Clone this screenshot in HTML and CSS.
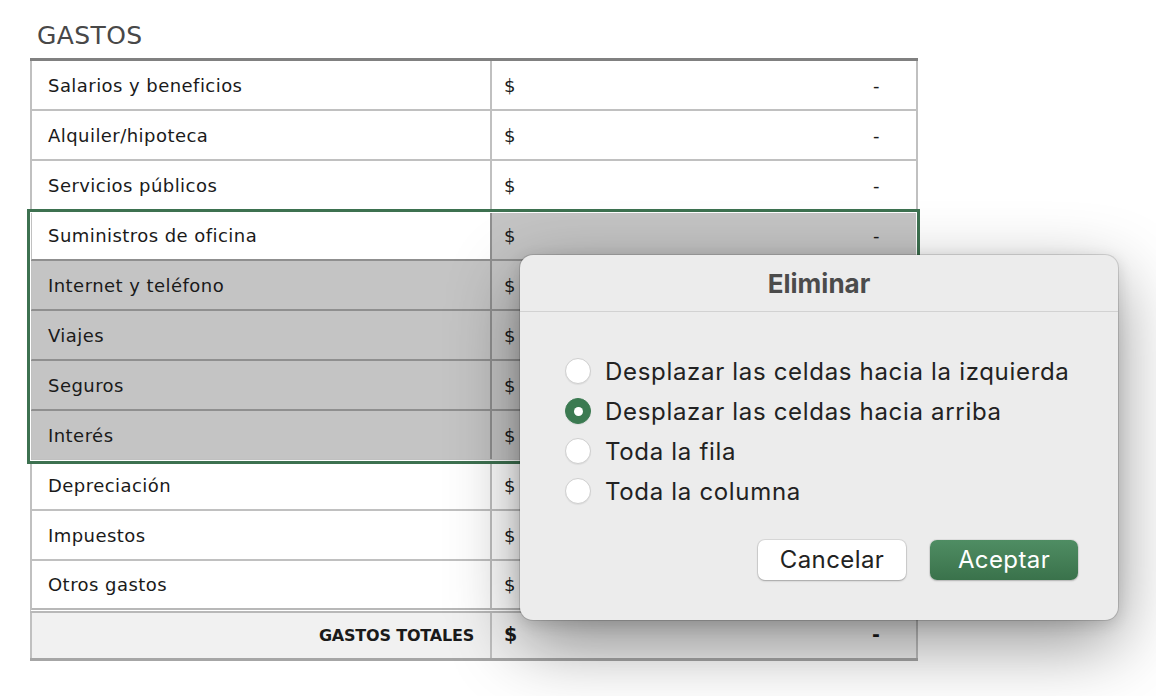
FILE: index.html
```html
<!DOCTYPE html>
<html lang="es">
<head>
<meta charset="utf-8">
<title>Gastos</title>
<link rel="stylesheet" href="styles.css">
</head>
<body>
<div class="page">
  <h1 class="title">GASTOS</h1>
  <div class="sheet">
    <div class="row"><div class="lbl">Salarios y beneficios</div><div class="val"><span>$</span><span>-</span></div></div>
    <div class="row"><div class="lbl">Alquiler/hipoteca</div><div class="val"><span>$</span><span>-</span></div></div>
    <div class="row"><div class="lbl">Servicios públicos</div><div class="val"><span>$</span><span>-</span></div></div>
    <div class="selection">
      <div class="row sel"><div class="lbl active">Suministros de oficina</div><div class="val"><span>$</span><span class="hidden-dash">-</span></div></div>
      <div class="row sel"><div class="lbl">Internet y teléfono</div><div class="val"><span>$</span><span>-</span></div></div>
      <div class="row sel"><div class="lbl">Viajes</div><div class="val"><span>$</span><span>-</span></div></div>
      <div class="row sel"><div class="lbl">Seguros</div><div class="val"><span>$</span><span>-</span></div></div>
      <div class="row sel last"><div class="lbl">Interés</div><div class="val"><span>$</span><span>-</span></div></div>
    </div>
    <div class="row"><div class="lbl">Depreciación</div><div class="val"><span>$</span><span>-</span></div></div>
    <div class="row"><div class="lbl">Impuestos</div><div class="val"><span>$</span><span>-</span></div></div>
    <div class="row pre-total"><div class="lbl">Otros gastos</div><div class="val"><span>$</span><span>-</span></div></div>
    <div class="row total"><div class="lbl">GASTOS TOTALES</div><div class="val"><span>$</span><span>-</span></div></div>
  </div>

  <div class="dialog">
    <div class="dlg-head">Eliminar</div>
    <div class="dlg-body">
      <label class="opt"><span class="radio"></span>Desplazar las celdas hacia la izquierda</label>
      <label class="opt"><span class="radio on"></span>Desplazar las celdas hacia arriba</label>
      <label class="opt"><span class="radio"></span>Toda la fila</label>
      <label class="opt"><span class="radio"></span>Toda la columna</label>
    </div>
    <div class="dlg-foot">
      <button class="btn cancel">Cancelar</button>
      <button class="btn ok">Aceptar</button>
    </div>
  </div>
</div>
</body>
</html>
```
FILE: styles.css
```css
html, body {
  margin: 0;
  padding: 0;
  background: #ffffff;
}
.page {
  position: relative;
  width: 1156px;
  height: 696px;
  overflow: hidden;
  padding: 0 0 0 30px;
  box-sizing: border-box;
  font-family: "DejaVu Sans", "Liberation Sans", sans-serif;
}
.title {
  margin: 0;
  padding: 21px 0 0 7px;
  height: 37px;
  font-size: 25px;
  font-weight: normal;
  color: #484848;
  line-height: 30px;
  letter-spacing: 0.4px;
}
.sheet {
  width: 888px;
  border-top: 3px solid #808080;
  border-bottom: 3px solid #a6a6a6;
  box-sizing: border-box;
}
.row {
  display: flex;
  height: 50px;
  border-left: 2px solid #c0c0c0;
  border-right: 2px solid #c0c0c0;
  border-bottom: 2px solid #c0c0c0;
  box-sizing: border-box;
  font-size: 18px;
  letter-spacing: 0.45px;
  color: #1a1a1a;
}
.lbl {
  width: 460px;
  padding-left: 16px;
  display: flex;
  align-items: center;
  border-right: 2px solid #c0c0c0;
  box-sizing: border-box;
}
.val {
  flex: 1;
  display: flex;
  align-items: center;
  justify-content: space-between;
  padding: 0 36px 0 12px;
}
.selection {
  position: relative;
}
.selection::after {
  content: "";
  position: absolute;
  left: -3px;
  top: -2px;
  right: -2px;
  bottom: -3px;
  border: 3px solid #3d7150;
  box-shadow: inset 0 0 0 1px #ffffff;
  pointer-events: none;
}
.row.sel {
  background: #c4c4c4;
  border-bottom-color: #8f8f8f;
}
.row.sel .lbl {
  border-right-color: #8f8f8f;
}
.row.sel.last {
  border-bottom-color: #c0c0c0;
}
.lbl.active {
  background: #ffffff;
}
.row.pre-total {
  height: 52px;
  border-bottom: 5px double #b8b8b8;
}
.row.total {
  height: 45px;
  border-bottom: none;
  background: #f1f1f1;
  font-weight: bold;
  font-size: 19px;
  letter-spacing: 0;
}
.row.total .lbl {
  justify-content: flex-end;
  padding-right: 16px;
  font-size: 16px;
  letter-spacing: -0.2px;
}
.row.total .val {
  padding-bottom: 4px;
}

/* dialog */
.dialog {
  position: absolute;
  left: 520px;
  top: 255px;
  width: 598px;
  height: 365px;
  box-sizing: border-box;
  background: #ececec;
  border-radius: 13px;
  box-shadow: 0 0 0 1px rgba(0,0,0,0.13), 0 24px 70px rgba(0,0,0,0.42), 0 4px 16px rgba(0,0,0,0.14);
  font-family: "Inter", "Noto Sans", sans-serif;
  color: #222222;
  display: flex;
  flex-direction: column;
}
.dlg-head {
  height: 57px;
  border-bottom: 1px solid #d2d2d2;
  box-sizing: border-box;
  display: flex;
  align-items: center;
  justify-content: center;
  font-size: 26px;
  font-weight: bold;
  color: #4b4b4b;
  padding-top: 1px;
}
.dlg-body {
  padding: 39px 0 0 45px;
  display: flex;
  flex-direction: column;
}
.opt {
  display: flex;
  align-items: center;
  height: 40px;
  font-size: 24px;
  gap: 14px;
  letter-spacing: 0.68px;
}
.radio {
  width: 26px;
  height: 26px;
  border-radius: 50%;
  box-sizing: border-box;
  background: #ffffff;
  border: 1px solid #cfcfcf;
  box-shadow: 0 1px 1px rgba(0,0,0,0.06);
  display: flex;
  align-items: center;
  justify-content: center;
  flex: none;
}
.radio.on {
  background: #3b7a51;
  border-color: #3b7a51;
}
.radio.on::after {
  content: "";
  width: 9px;
  height: 9px;
  border-radius: 50%;
  background: #ffffff;
}
.dlg-foot {
  margin-top: auto;
  display: flex;
  justify-content: flex-end;
  gap: 24px;
  padding: 0 40px 40px 0;
}
.btn {
  width: 148px;
  height: 40px;
  border: none;
  border-radius: 7px;
  font-family: "Inter", "Noto Sans", sans-serif;
  font-size: 24px;
  letter-spacing: 0.4px;
  padding: 0 0 1px 0;
}
.btn.cancel {
  background: #ffffff;
  color: #222222;
  box-shadow: 0 0 0 1px rgba(0,0,0,0.08), 0 1px 2px rgba(0,0,0,0.25);
}
.btn.ok {
  background: linear-gradient(#4f8d63, #3a724b);
  color: #ffffff;
  box-shadow: 0 0 0 1px rgba(0,0,0,0.06), 0 1px 2px rgba(0,0,0,0.2);
}
```
